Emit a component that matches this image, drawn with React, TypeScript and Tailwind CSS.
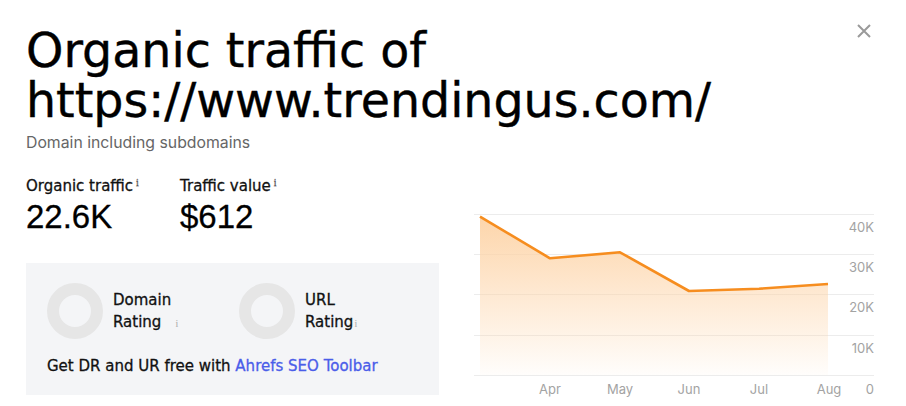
import React from "react";

function Info({ className = "" }: { className?: string }) {
  return (
    <span
      className={"inline-block text-[10px] leading-none text-[#aaaaaa] " + className}
      style={{ fontFamily: "Georgia, 'Liberation Serif', serif" }}
    >
      i
    </span>
  );
}

function Ring() {
  return <div className="h-[56px] w-[56px] shrink-0 rounded-full border-[12px] border-[#e6e6e6]" />;
}

function Chart() {
  const pts: [number, number][] = [
    [14, 16.7],
    [84, 58.3],
    [154, 52.3],
    [223, 91],
    [293, 88.7],
    [362, 84],
  ];
  const line = pts.map((p, i) => `${i === 0 ? "M" : "L"}${p[0]},${p[1]}`).join(" ");
  const area = `${line} L362,175 L14,175 Z`;
  const grid = [14, 54, 94, 135, 175];
  const ylabels: [string, number][] = [
    ["40K", 32],
    ["30K", 72],
    ["20K", 112],
    ["10K", 153],
    ["0", 194],
  ];
  const months: [string, number][] = [
    ["Apr", 84],
    ["May", 154],
    ["Jun", 223],
    ["Jul", 293],
    ["Aug", 363],
  ];
  return (
    <svg width="420" height="206" viewBox="0 0 420 206" className="block">
      <defs>
        <linearGradient id="fillg" x1="0" y1="0" x2="0" y2="1">
          <stop offset="0%" stopColor="#fdd3a6" stopOpacity="0.95" />
          <stop offset="100%" stopColor="#fdd3a6" stopOpacity="0.04" />
        </linearGradient>
      </defs>
      {grid.map((y) => (
        <line key={y} x1="8" x2="408" y1={y + 0.5} y2={y + 0.5} stroke="#ececec" strokeWidth="1" />
      ))}
      <path d={area} fill="url(#fillg)" />
      <path d={line} fill="none" stroke="#f68d1f" strokeWidth="2.6" strokeLinejoin="round" />
      {ylabels.map(([t, y]) => (
        <text key={t} x="408" y={y} textAnchor="end" fontSize="13" fill="#a3a3a3" fontFamily="Inter, sans-serif">
          {t}
        </text>
      ))}
      {months.map(([t, x]) => (
        <text key={t} x={x} y="194" textAnchor="middle" fontSize="13" fill="#a3a3a3" fontFamily="Inter, sans-serif">
          {t}
        </text>
      ))}
    </svg>
  );
}

const dv = { fontFamily: "'DejaVu Sans', 'Noto Sans', sans-serif" };
const num = { fontFamily: "'Liberation Sans', Arial, sans-serif" };

export default function App() {
  return (
    <div className="relative h-[406px] w-[906px] overflow-hidden bg-white" style={{ fontFamily: "Inter, 'Noto Sans', sans-serif" }}>
      <button className="absolute right-[34px] top-[23px]" aria-label="close">
        <svg width="16" height="16" viewBox="0 0 16 16">
          <path d="M2 2 L14 14 M14 2 L2 14" stroke="#9a9a9a" strokeWidth="2" />
        </svg>
      </button>
      <div className="pl-[26px] pt-[26px]">
        <h1 className="text-[47.5px] font-normal leading-[50px] text-black [-webkit-text-stroke:0.4px_#000]" style={dv}>
          Organic traffic of
          <br />
          https://www.trendingus.com/
        </h1>
        <div className="mt-[8px] text-[15.8px] leading-[18px] text-[#666]">Domain including subdomains</div>
        <div className="flex">
          <div className="w-[440px] shrink-0">
            <div className="mt-[25px] flex" style={dv}>
              <div className="w-[154px]">
                <div className="flex text-[15px] leading-[18px] text-[#111] [-webkit-text-stroke:0.3px_#111]">
                  Organic traffic
                  <Info className="ml-[3px] mt-[1px]" />
                </div>
                <div className="mt-[4px] text-[33px] leading-[36px] text-black [-webkit-text-stroke:0.3px_#000]" style={num}>
                  22.6K
                </div>
              </div>
              <div>
                <div className="flex text-[15px] leading-[18px] text-[#111] [-webkit-text-stroke:0.3px_#111]">
                  Traffic value
                  <Info className="ml-[3px] mt-[1px]" />
                </div>
                <div className="mt-[4px] text-[33px] leading-[36px] text-black [-webkit-text-stroke:0.3px_#000]" style={num}>
                  $612
                </div>
              </div>
            </div>
            <div className="mt-[28px] h-[132px] w-[413px] bg-[#f4f5f7] px-[21px] pt-[20px]" style={dv}>
              <div className="flex">
                <div className="flex w-[192px] items-center gap-[10px]">
                  <Ring />
                  <div className="text-[15px] leading-[22px] text-[#111] [-webkit-text-stroke:0.3px_#111]">
                    Domain
                    <br />
                    Rating
                    <Info className="ml-[14px] [-webkit-text-stroke:0px]" />
                  </div>
                </div>
                <div className="flex items-center gap-[10px]">
                  <Ring />
                  <div className="text-[15px] leading-[22px] text-[#111] [-webkit-text-stroke:0.3px_#111]">
                    URL
                    <br />
                    Rating
                    <Info className="ml-[1px] [-webkit-text-stroke:0px]" />
                  </div>
                </div>
              </div>
              <div className="mt-[17px] text-[15px] leading-[20px] text-[#111] [-webkit-text-stroke:0.3px_#111]">
                Get DR and UR free with{" "}
                <span className="text-[#4a5de9] [-webkit-text-stroke:0.3px_#4a5de9]">Ahrefs SEO Toolbar</span>
              </div>
            </div>
          </div>
          <div className="mt-[48px]">
            <Chart />
          </div>
        </div>
      </div>
    </div>
  );
}
